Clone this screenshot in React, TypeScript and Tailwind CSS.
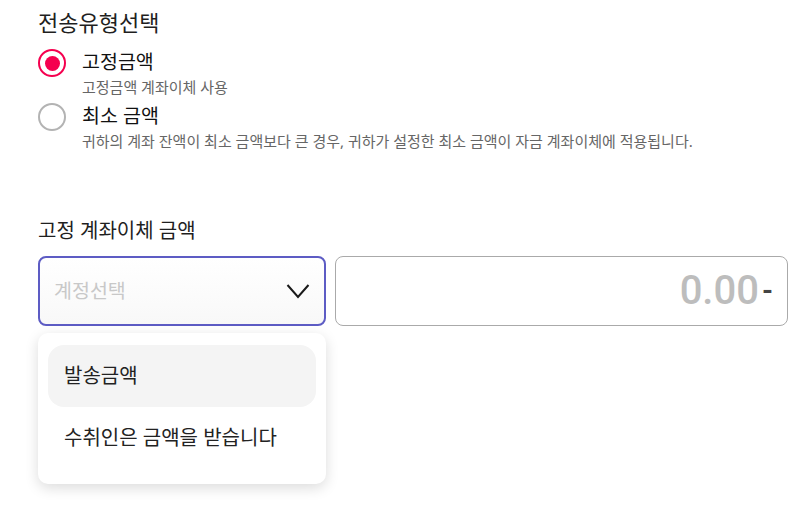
import { useState } from 'react'

const options = [
  { id: 'fixed', label: '고정금액', desc: '고정금액 계좌이체 사용' },
  {
    id: 'min',
    label: '최소 금액',
    desc: '귀하의 계좌 잔액이 최소 금액보다 큰 경우, 귀하가 설정한 최소 금액이 자금 계좌이체에 적용됩니다.',
  },
]

const menuItems = ['발송금액', '수취인은 금액을 받습니다']

export default function App() {
  const [selected, setSelected] = useState('fixed')

  return (
    <div
      className="w-[811px] h-[514px] bg-white text-[#1f1f1f] pl-[38px] pr-[23px] pt-[8px] overflow-hidden"
      style={{ fontFamily: '"Noto Sans", "Noto Sans CJK KR", sans-serif' }}
    >
      <h2 className="text-[22px] leading-[28px]">전송유형선택</h2>

      {/* Radio group */}
      <div className="mt-[13px] flex flex-col gap-[4px]">
        {options.map((o) => {
          const on = selected === o.id
          return (
            <label key={o.id} className="flex items-start gap-[16px] cursor-pointer" onClick={() => setSelected(o.id)}>
              <span
                className={`w-[28px] h-[28px] rounded-full border-[2.5px] flex items-center justify-center shrink-0 ${
                  on ? 'border-[#f5004f]' : 'border-[#b3b3b3]'
                }`}
              >
                {on && <span className="w-[15px] h-[15px] rounded-full bg-[#f5004f]" />}
              </span>
              <div className="flex flex-col">
                <span className="text-[19.5px] leading-[26px] text-[#111]">{o.label}</span>
                <span className="text-[15px] leading-[24px] text-[#666]">{o.desc}</span>
              </div>
            </label>
          )
        })}
      </div>

      {/* Amount */}
      <h3 className="mt-[64px] text-[20px] leading-[28px]">고정 계좌이체 금액</h3>

      <div className="mt-[11px] flex gap-[9px]">
        <div className="relative w-[288px]">
          <button className="w-full h-[70px] rounded-[8px] border-2 border-[#5d5cc4] bg-gradient-to-b from-white to-[#f8f8f8] flex items-center justify-between pl-[14px] pr-[14px]">
            <span className="text-[19.5px] text-[#c8c8c8]">계정선택</span>
            <svg width="24" height="16" viewBox="0 0 24 16" fill="none" stroke="#1a1a1a" strokeWidth="2">
              <path d="M1.5 2 L12 14 L22.5 2" />
            </svg>
          </button>

          {/* Dropdown menu */}
          <div className="absolute left-0 top-[77px] w-[288px] h-[151px] bg-white rounded-[10px] shadow-[0_4px_14px_rgba(0,0,0,0.14)] px-[10px] pt-[12px]">
            {menuItems.map((m, i) => (
              <div
                key={m}
                className={`h-[62px] flex items-center px-[16px] rounded-[16px] text-[20px] text-[#222] ${
                  i === 0 ? 'bg-[#f4f4f4]' : ''
                }`}
              >
                {m}
              </div>
            ))}
          </div>
        </div>

        <div className="flex-1 h-[70px] rounded-[8px] border border-[#aaaaaa] flex items-center justify-end pr-[14px]">
          <span
            className="text-[40px] font-medium text-[#bdbdbd]"
            style={{ fontFamily: 'Roboto, "Noto Sans", sans-serif' }}
          >
            0.00
          </span>
          <span
            className="ml-[3px] text-[28px] font-bold text-[#444]"
            style={{ fontFamily: 'Roboto, "Noto Sans", sans-serif' }}
          >
            -
          </span>
        </div>
      </div>
    </div>
  )
}
